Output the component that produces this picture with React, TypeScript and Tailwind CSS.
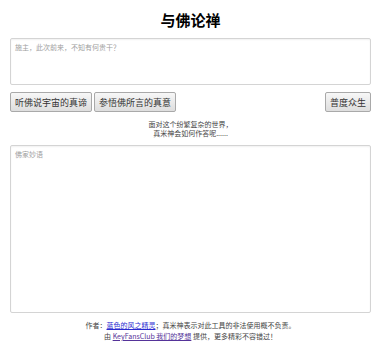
import React from 'react';

const cjk = { fontFamily: '"Noto Sans CJK SC", "Liberation Sans", sans-serif' };

const ZenButton: React.FC<{ label: string }> = ({ label }) => (
  <button className="h-[20px] px-[4px] border border-[#a9a9a9] rounded-[2px] bg-gradient-to-b from-[#f7f7f7] to-[#dedede] text-[9px] leading-none text-[#333]">
    {label}
  </button>
);

export default function App() {
  const [input, setInput] = React.useState('');
  const [output, setOutput] = React.useState('');

  return (
    <div className="w-[386px] h-[351px] bg-white pl-[10px] pr-[15px] overflow-hidden" style={cjk}>
      {/* Title */}
      <h1 className="pt-[9px] h-[38px] text-center text-[15px] leading-[22px] font-bold text-black">与佛论禅</h1>

      {/* Input */}
      <textarea
        value={input}
        onChange={(e) => setInput(e.target.value)}
        placeholder="施主，此次前来，不知有何贵干？"
        className="block w-full h-[47px] resize-none border border-[#d4d4d4] rounded-[2px] shadow-[inset_0_1px_2px_rgba(0,0,0,0.06)] px-[4px] py-[3px] text-[7px] leading-[10px] text-[#333] placeholder:text-[#a0a0a0] outline-none"
      />

      {/* Actions */}
      <div className="flex items-center justify-between mt-[7px]">
        <div className="flex gap-[2px]">
          <ZenButton label="听佛说宇宙的真谛" />
          <ZenButton label="参悟佛所言的真意" />
        </div>
        <ZenButton label="普度众生" />
      </div>

      <div className="mt-[8px] text-center text-[7px] leading-[9px] text-[#444]">
        <div>面对这个纷繁复杂的世界，</div>
        <div>真米神会如何作答呢......</div>
      </div>

      {/* Output */}
      <textarea
        value={output}
        onChange={(e) => setOutput(e.target.value)}
        placeholder="佛家妙语"
        className="block w-full h-[168px] mt-[7px] resize-none border border-[#d4d4d4] rounded-[2px] shadow-[inset_0_1px_2px_rgba(0,0,0,0.06)] px-[4px] py-[3px] text-[7px] leading-[10px] text-[#333] placeholder:text-[#a0a0a0] outline-none"
      />

      {/* Footer */}
      <div className="mt-[7px] text-center text-[7px] leading-[11px] text-[#444]">
        <div>
          作者：<a href="#" className="text-[#2a2ad0] underline">蓝色的风之精灵</a>；真米神表示对此工具的非法使用概不负责。
        </div>
        <div>
          由 <a href="#" className="text-[#553399] underline">KeyFansClub 我们的梦想</a> 提供，更多精彩不容错过！
        </div>
      </div>
    </div>
  );
}
